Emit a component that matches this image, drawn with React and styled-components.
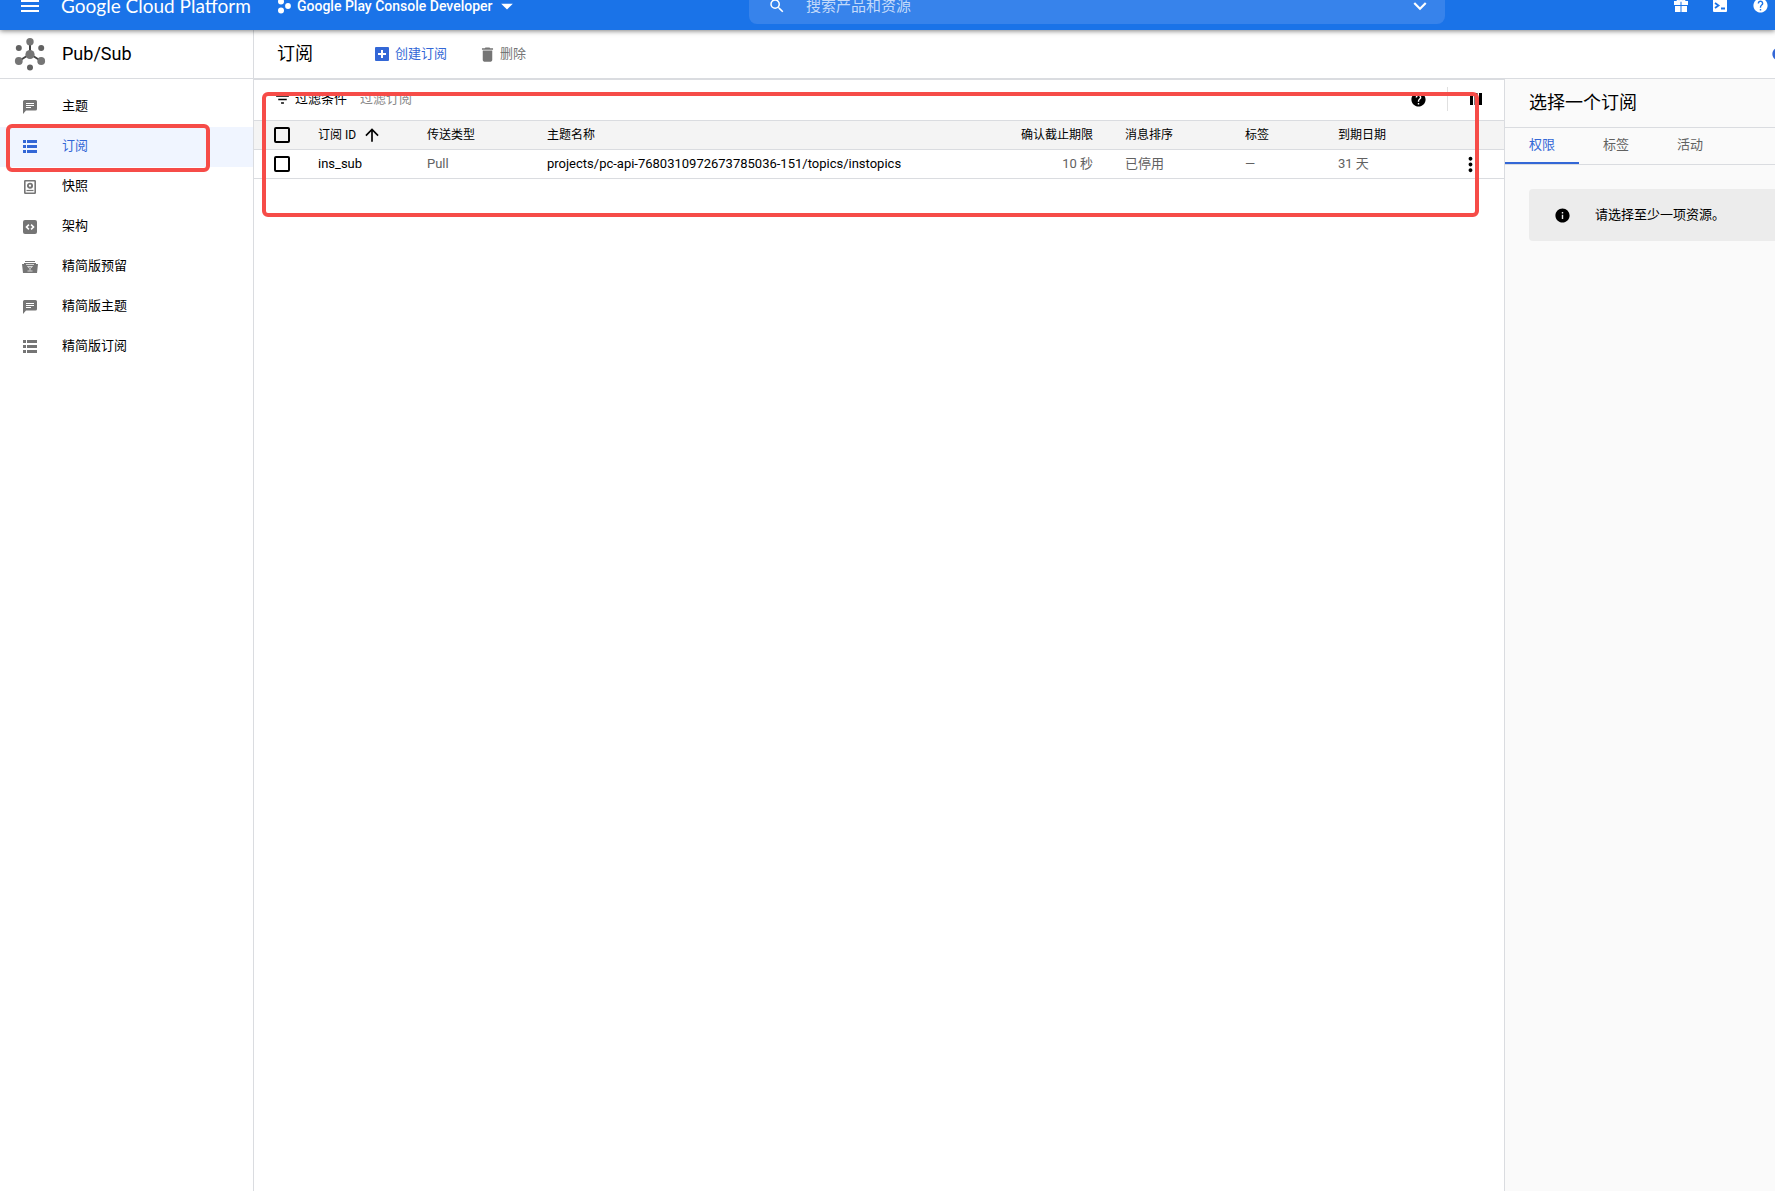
import React from "react";
import styled, { createGlobalStyle } from "styled-components";
import {
  MdMenu,
  MdSearch,
  MdExpandMore,
  MdArrowDropDown,
  MdHelp,
  MdInfo,
  MdMoreVert,
  MdDelete,
  MdArrowUpward,
  MdFilterList,
} from "react-icons/md";

const GlobalStyle = createGlobalStyle`
  * {
    box-sizing: border-box;
  }
  body {
    margin: 0;
    overflow-x: hidden;
    background: #ffffff;
    color: #000000;
    font-family: Roboto, "Noto Sans CJK SC", sans-serif;
    font-size: 13px;
    line-height: 20px;
  }
  button, input {
    font: inherit;
    color: inherit;
  }
  button {
    display: flex;
    align-items: center;
    padding: 0;
    border: 0;
    background: none;
    cursor: pointer;
  }
  a {
    color: inherit;
    text-decoration: none;
  }
  svg {
    display: block;
    flex: none;
  }
`;

const Page = styled.div`
  display: flex;
  flex-direction: column;
  min-height: 100vh;
`;

const TopBar = styled.header`
  position: relative;
  z-index: 2;
  display: flex;
  align-items: center;
  height: 48px;
  margin-top: -18px;
  padding: 0 6px 0 18px;
  background: #1a73e8;
  color: #ffffff;
  box-shadow: 0 1px 5px rgba(0, 0, 0, 0.5);
`;

const BarStart = styled.div`
  display: flex;
  align-items: center;
  flex: 0 0 731px;
`;

const Brand = styled.a`
  width: 216px;
  margin-left: 19px;
  font-family: Lato, sans-serif;
  font-size: 19px;
  line-height: 24px;
  white-space: nowrap;
`;

const ProjectButton = styled.button`
  gap: 6px;
  font-size: 14px;
  font-weight: 500;
`;

const ProjectArrow = styled(MdArrowDropDown)`
  margin-left: -6px;
`;

const SearchBox = styled.label`
  display: flex;
  align-items: center;
  flex: 0 1 696px;
  height: 36px;
  padding: 0 12px 0 19px;
  border-radius: 8px;
  background: #3783eb;
`;

const SearchInput = styled.input`
  flex: 1;
  min-width: 0;
  margin-left: 20px;
  padding: 0;
  border: 0;
  outline: 0;
  background: none;
  font-size: 15px;
  &::placeholder {
    color: #c3dafa;
    opacity: 1;
  }
`;

const BarActions = styled.div`
  display: flex;
  gap: 25px;
  margin-left: auto;
  padding-bottom: 2px;
`;

const Body = styled.div`
  display: flex;
  flex: 1;
`;

const Sidebar = styled.aside`
  flex: 0 0 254px;
  border-right: 1px solid #dadce0;
`;

const ProductTitle = styled.div`
  display: flex;
  align-items: center;
  gap: 16px;
  height: 49px;
  padding-left: 14px;
  border-bottom: 1px solid #dadce0;
  font-size: 18px;
`;

const Nav = styled.nav`
  padding-top: 8px;
`;

const NavItem = styled.a`
  position: relative;
  display: flex;
  align-items: center;
  gap: 24px;
  height: 40px;
  padding: 0 0 2px 22px;
  background: ${(props) => (props.$active ? "#f0f5ff" : "transparent")};
  color: ${(props) => (props.$active ? "#3367d6" : "#000000")};
  svg {
    color: ${(props) => (props.$active ? "#3367d6" : "#757575")};
  }
`;

/* Red frame that marks an area of the page. */
const Marker = styled.span`
  position: absolute;
  border: 4px solid #f64c48;
  border-radius: 6px;
  pointer-events: none;
`;

const NavMarker = styled(Marker)`
  top: -3px;
  left: 6px;
  right: 43px;
  height: 48px;
`;

const TableMarker = styled(Marker)`
  top: 12px;
  left: 8px;
  right: 25px;
  height: 125px;
`;

const Content = styled.div`
  display: flex;
  flex-direction: column;
  flex: 1;
  min-width: 0;
`;

const ContentHeader = styled.div`
  display: flex;
  align-items: center;
  height: 49px;
  padding-left: 23px;
  border-bottom: 1px solid #dadce0;
  overflow: hidden;
`;

const PageTitle = styled.h1`
  margin: 0 60px 0 0;
  font-size: 18px;
  font-weight: 400;
`;

const ActionButton = styled.button`
  gap: 3px;
  margin-right: 31px;
  color: ${(props) => (props.disabled ? "#757575" : "#3367d6")};
`;

const EdgeButton = styled.button`
  margin-left: auto;
  margin-right: -12px;
  color: #3367d6;
`;

const Columns = styled.div`
  display: flex;
  flex: 1;
`;

const ListArea = styled.main`
  position: relative;
  flex: 1;
  min-width: 0;
  border-top: 1px solid #dadce0;
`;

const FilterBar = styled.div`
  display: flex;
  align-items: center;
  height: 40px;
  padding: 0 22px 2px 20px;
`;

const FilterLabel = styled.label`
  display: flex;
  align-items: center;
  gap: 4px;
`;

const FilterInput = styled.input`
  flex: 1;
  margin-left: 13px;
  padding: 0;
  border: 0;
  outline: 0;
  background: none;
  &::placeholder {
    color: #8a8a8a;
    opacity: 1;
  }
`;

const Divider = styled.span`
  width: 1px;
  height: 24px;
  margin: 0 22px 0 20px;
  background: #e0e0e0;
`;

const Table = styled.table`
  width: 100%;
  table-layout: fixed;
  border-collapse: collapse;
`;

const Col = styled.col`
  width: ${(props) => (props.$width ? props.$width + "px" : "auto")};
`;

const HeadCell = styled.th`
  height: 29px;
  padding: 0 16px;
  border-top: 1px solid #dadce0;
  border-bottom: 1px solid #dadce0;
  background: #f4f4f4;
  font-size: 12px;
  font-weight: 400;
  text-align: ${(props) => (props.$right ? "right" : "left")};
  white-space: nowrap;
`;

const Cell = styled.td`
  height: 29px;
  padding: 0 16px;
  border-bottom: 1px solid #dadce0;
  color: ${(props) => (props.$strong ? "#000000" : "#616161")};
  text-align: ${(props) => (props.$right ? "right" : "left")};
  white-space: nowrap;
`;

const SortButton = styled.button`
  gap: 6px;
`;

const Checkbox = styled.input`
  display: block;
  appearance: none;
  width: 16px;
  height: 16px;
  margin: 0 0 0 4px;
  border: 2px solid #000000;
  border-radius: 2px;
`;

const RowMenu = styled.button`
  margin-left: 11px;
`;

const InfoPanel = styled.aside`
  flex: 0 0 271px;
  border-left: 1px solid #dadce0;
  background: #fafafa;
`;

const PanelTitle = styled.h2`
  display: flex;
  align-items: center;
  height: 49px;
  margin: 0;
  padding-left: 24px;
  border-bottom: 1px solid #dadce0;
  font-size: 18px;
  font-weight: 400;
`;

const Tabs = styled.div`
  display: flex;
  height: 37px;
  border-bottom: 1px solid #dadce0;
`;

const Tab = styled.button`
  padding: 0 24px;
  border-bottom: 2px solid ${(props) => (props.$active ? "#3367d6" : "transparent")};
  color: ${(props) => (props.$active ? "#3367d6" : "#616161")};
`;

const Notice = styled.div`
  display: flex;
  align-items: center;
  gap: 24px;
  height: 52px;
  margin: 24px 0 0 24px;
  padding-left: 25px;
  border-radius: 4px 0 0 4px;
  background: #ececec;
`;

const PubSubIcon = () => (
  <svg width="32" height="34" viewBox="0 0 32 34" fill="#757575">
    <path d="M16 17V5M16 17L5 24M16 17l11 7" stroke="#424242" strokeWidth="2" />
    <circle cx="16" cy="17.500" r="4.6" />
    <circle cx="16" cy="4.7" r="3.7" />
    <circle cx="4.8" cy="24" r="3.9" />
    <circle cx="27.2" cy="24" r="3.9" />
    <circle cx="4.8" cy="11" r="3" fill="#616161" />
    <circle cx="27.2" cy="11" r="3" fill="#616161" />
    <circle cx="16" cy="30.5" r="3" fill="#616161" />
  </svg>
);

const ChatIcon = () => (
  <svg width="16" height="16" viewBox="0 0 16 16">
    <path d="M2.500 2h11A1.500 1.500 0 0 1 15 3.500v7.500a1.500 1.500 0 0 1-1.500 1.500H4L1 16V3.500A1.500 1.500 0 0 1 2.500 2z" fill="currentColor" />
    <path d="M4 5.500h8M4 7.500h8M4 9.500h5" stroke="#ffffff" />
  </svg>
);

const ListIcon = () => (
  <svg width="16" height="16" viewBox="0 0 16 16" fill="currentColor">
    <path d="M1 2h3v3H1zM5 2h10v3H5zM1 7h3v3H1zM5 7h10v3H5zM1 12h3v3H1zM5 12h10v3H5z" />
  </svg>
);

const SnapshotIcon = () => (
  <svg width="16" height="16" viewBox="0 0 16 16" fill="none" stroke="currentColor">
    <rect x="2.800" y="2.800" width="10.400" height="12.400" rx="0.500" strokeWidth="1.600" />
    <circle cx="8" cy="7.700" r="2.100" strokeWidth="1.900" />
    <path d="M4.500 12.500h7" strokeWidth="1.200" />
  </svg>
);

const SchemaIcon = () => (
  <svg width="16" height="16" viewBox="0 0 16 16">
    <rect x="1" y="2" width="14" height="14" rx="2" fill="currentColor" />
    <path d="M6.900 6.700L4.500 9l2.400 2.300M9.100 6.700L11.500 9l-2.400 2.300" fill="none" stroke="#ffffff" strokeWidth="1.600" />
  </svg>
);

const ReservationIcon = () => (
  <svg width="16" height="16" viewBox="0 0 16 16">
    <path d="M3 3h10v1H3zM2 5h12v1h2l-1 9H1L0 6h2z" fill="currentColor" />
    <path d="M4 6.500h8M5.500 8.500h5L8 10.500zM8 10.500v2M5.500 13h5" fill="none" stroke="#e0e0e0" strokeWidth="0.900" />
  </svg>
);

const ProjectIcon = () => (
  <svg width="14" height="16" viewBox="0 0 14 16" fill="#ffffff">
    <circle cx="4" cy="3.5" r="3" />
    <circle cx="4" cy="12.5" r="3" />
    <circle cx="11" cy="8" r="2.9" />
  </svg>
);

const GiftIcon = () => (
  <svg width="14" height="16" viewBox="0 0 14 16" fill="#ffffff">
    <path d="M0 4h6.500v4H0zM7.500 4H14v4H7.500zM1 9h5.500v6H1zM7.500 9H13v6H7.500z" />
    <path d="M7 4C5 1 3 1 3 2.500S5 4 7 4c2 0 4 0 4-1.500S9 1 7 4z" fill="none" stroke="#ffffff" strokeWidth="1.4" />
  </svg>
);

const ShellIcon = () => (
  <svg width="14" height="16" viewBox="0 0 14 16">
    <rect y="1" width="14" height="14" rx="1" fill="#ffffff" />
    <path d="M2 6l3.500 2.500L2 11M8 11.500h4" fill="none" stroke="#1a73e8" strokeWidth="1.8" />
  </svg>
);

const AddIcon = () => (
  <svg width="19" height="19" viewBox="0 0 19 19">
    <rect x="2" y="2" width="14" height="14" rx="1" fill="currentColor" />
    <path d="M9 5v8M5 9h8" stroke="#ffffff" strokeWidth="2" />
  </svg>
);

const ColumnsIcon = () => (
  <svg width="12" height="12" viewBox="0 0 12 12">
    <path d="M0 0h3v12H0zM4.5 0h3v12h-3zM9 0h3v12H9z" />
  </svg>
);

const navItems = [
  { label: "主题", icon: <ChatIcon /> },
  { label: "订阅", icon: <ListIcon />, active: true },
  { label: "快照", icon: <SnapshotIcon /> },
  { label: "架构", icon: <SchemaIcon /> },
  { label: "精简版预留", icon: <ReservationIcon /> },
  { label: "精简版主题", icon: <ChatIcon /> },
  { label: "精简版订阅", icon: <ListIcon /> },
];

const columnWidths = [48, 109, 120, null, 152, 120, 93, 110, 72];

const subscriptions = [
  {
    id: "ins_sub",
    type: "Pull",
    topic: "projects/pc-api-7680310972673785036-151/topics/instopics",
    deadline: "10 秒",
    ordering: "已停用",
    labels: "—",
    expiry: "31 天",
  },
];

const SubscriptionTable = () => (
  <Table>
    <colgroup>
      {columnWidths.map((width, i) => (
        <Col key={i} $width={width} />
      ))}
    </colgroup>
    <thead>
      <tr>
        <HeadCell>
          <Checkbox type="checkbox" aria-label="全选" />
        </HeadCell>
        <HeadCell>
          <SortButton>
            订阅 ID <MdArrowUpward size={20} />
          </SortButton>
        </HeadCell>
        <HeadCell>传送类型</HeadCell>
        <HeadCell>主题名称</HeadCell>
        <HeadCell $right>确认截止期限</HeadCell>
        <HeadCell>消息排序</HeadCell>
        <HeadCell>标签</HeadCell>
        <HeadCell>到期日期</HeadCell>
        <HeadCell />
      </tr>
    </thead>
    <tbody>
      {subscriptions.map((sub) => (
        <tr key={sub.id}>
          <Cell>
            <Checkbox type="checkbox" aria-label={sub.id} />
          </Cell>
          <Cell $strong>
            <a href="#sub">{sub.id}</a>
          </Cell>
          <Cell>{sub.type}</Cell>
          <Cell $strong>{sub.topic}</Cell>
          <Cell $right>{sub.deadline}</Cell>
          <Cell>{sub.ordering}</Cell>
          <Cell>{sub.labels}</Cell>
          <Cell>{sub.expiry}</Cell>
          <Cell $strong>
            <RowMenu aria-label="更多">
              <MdMoreVert size={23} />
            </RowMenu>
          </Cell>
        </tr>
      ))}
    </tbody>
  </Table>
);

export default function App() {
  return (
    <Page>
      <GlobalStyle />
      <TopBar>
        <BarStart>
          <button aria-label="菜单">
            <MdMenu size={24} />
          </button>
          <Brand href="#home">Google Cloud Platform</Brand>
          <ProjectButton>
            <ProjectIcon />
            Google Play Console Developer
            <ProjectArrow size={28} />
          </ProjectButton>
        </BarStart>
        <SearchBox>
          <MdSearch size={18} />
          <SearchInput placeholder="搜索产品和资源" aria-label="搜索产品和资源" />
          <MdExpandMore size={26} />
        </SearchBox>
        <BarActions>
          <button aria-label="礼品">
            <GiftIcon />
          </button>
          <button aria-label="Shell">
            <ShellIcon />
          </button>
          <button aria-label="帮助">
            <MdHelp size={17} />
          </button>
        </BarActions>
      </TopBar>
      <Body>
        <Sidebar>
          <ProductTitle>
            <PubSubIcon />
            Pub/Sub
          </ProductTitle>
          <Nav>
            {navItems.map((item) => (
              <NavItem key={item.label} href="#nav" $active={item.active}>
                {item.icon}
                {item.label}
                {item.active && <NavMarker />}
              </NavItem>
            ))}
          </Nav>
        </Sidebar>
        <Content>
          <ContentHeader>
            <PageTitle>订阅</PageTitle>
            <ActionButton>
              <AddIcon />
              创建订阅
            </ActionButton>
            <ActionButton disabled>
              <MdDelete size={19} />
              删除
            </ActionButton>
            <EdgeButton aria-label="信息">
              <MdInfo size={16} />
            </EdgeButton>
          </ContentHeader>
          <Columns>
            <ListArea>
              <FilterBar>
                <FilterLabel htmlFor="filter">
                  <MdFilterList size={17} />
                  过滤条件
                </FilterLabel>
                <FilterInput id="filter" placeholder="过滤订阅" />
                <button aria-label="帮助">
                  <MdHelp size={17} />
                </button>
                <Divider />
                <button aria-label="列">
                  <ColumnsIcon />
                </button>
              </FilterBar>
              <SubscriptionTable />
              <TableMarker />
            </ListArea>
            <InfoPanel>
              <PanelTitle>选择一个订阅</PanelTitle>
              <Tabs>
                <Tab $active>权限</Tab>
                <Tab>标签</Tab>
                <Tab>活动</Tab>
              </Tabs>
              <Notice>
                <MdInfo size={17} />
                请选择至少一项资源。
              </Notice>
            </InfoPanel>
          </Columns>
        </Content>
      </Body>
    </Page>
  );
}
